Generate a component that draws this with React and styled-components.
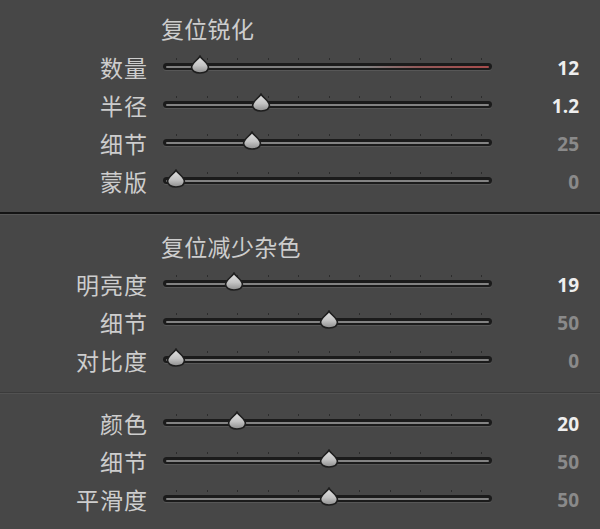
import React from "react";
import styled, { createGlobalStyle } from "styled-components";

const Global = createGlobalStyle`
  html, body { margin: 0; padding: 0; background: #474747; }
  body { font-family: "Noto Sans CJK SC", "Noto Sans", sans-serif; }
`;

const Panel = styled.div`
  width: 600px;
  height: 529px;
  overflow: hidden;
  background: #474747;
  display: flex;
  flex-direction: column;
`;

const Section = styled.section`
  display: flex;
  flex-direction: column;
  padding-top: ${(p) => p.$top}px;
`;

const Heading = styled.div`
  height: 30px;
  line-height: 30px;
  padding-left: 161px;
  margin-bottom: ${(p) => p.$after}px;
  font-size: 23px;
  letter-spacing: 0.3px;
  color: #cdcdcd;
  white-space: nowrap;
`;

const Row = styled.div`
  display: grid;
  grid-template-columns: 148px 344px 87px;
  height: 38px;
  align-items: center;
`;

const Label = styled.div`
  font-size: 23px;
  letter-spacing: 1px;
  color: #cdcdcd;
  text-align: right;
  line-height: 37px;
  padding-bottom: 1px;
  white-space: nowrap;
`;

const SliderWrap = styled.div`
  position: relative;
  height: 38px;
  margin-left: 15px;
  display: flex;
  flex-direction: column;
  padding-top: 9px;
  box-sizing: border-box;
`;

const Ticks = styled.div`
  margin-left: 13px;
  width: 306px;
  height: 2px;
  display: flex;
  justify-content: space-between;
`;

const Tick = styled.span`
  width: 1px;
  height: 2px;
  background: #2c2c2c;
`;

const Track = styled.div`
  margin-top: 3px;
  height: 7px;
  border-radius: 4px;
  background: #1b1b1b;
  box-shadow: 0 1px 0 rgba(255, 255, 255, 0.09);
  display: flex;
  flex-direction: column;
  padding: 3px 3px 2px;
  box-sizing: border-box;
`;

const Inner = styled.div`
  height: 2px;
  border-radius: 1px;
  background: ${(p) =>
    p.$tint
      ? "linear-gradient(to right, #808080 0%, #808080 62%, #925a5a 78%, #a84c4c 100%)"
      : "#838383"};
`;

const Thumb = styled.svg`
  position: absolute;
  top: 6px;
  width: 20px;
  height: 19px;
  margin-left: -10px;
`;

const Value = styled.div`
  font-family: "Open Sans", "Noto Sans", sans-serif;
  font-weight: 700;
  font-size: 19px;
  text-align: right;
  line-height: 38px;
  color: ${(p) => (p.$active ? "#eeeeee" : "#8a8a8a")};
`;

const SepStrong = styled.div`
  margin-top: ${(p) => p.$top}px;
  height: 2px;
  background: #141414;
  border-bottom: 1px solid #575757;
`;

const SepSoft = styled.div`
  margin-top: ${(p) => p.$top}px;
  height: 1px;
  background: #3b3b3b;
  border-bottom: 1px solid #525252;
`;

function Slider({ pos, tint }) {
  const left = 13 + pos * 305;
  return (
    <SliderWrap>
      <Ticks>
        {Array.from({ length: 11 }).map((_, i) => (
          <Tick key={i} />
        ))}
      </Ticks>
      <Track>
        <Inner $tint={tint} />
      </Track>
      <Thumb viewBox="0 0 20 19" style={{ left }}>
        <defs>
          <linearGradient id="tg" x1="0" y1="0" x2="0" y2="1">
            <stop offset="0" stopColor="#e2e2e2" />
            <stop offset="0.55" stopColor="#c4c4c4" />
            <stop offset="1" stopColor="#8e8e8e" />
          </linearGradient>
        </defs>
        <path
          d="M10 1.2 C11.4 4.2 18.4 8 18.4 12.3 C18.4 16 14.8 18 10 18 C5.2 18 1.6 16 1.6 12.3 C1.6 8 8.6 4.2 10 1.2 Z"
          fill="url(#tg)"
          stroke="#1e1e1e"
          strokeWidth="1.6"
        />
      </Thumb>
    </SliderWrap>
  );
}

function SliderRow({ label, value, pos, active, tint }) {
  return (
    <Row>
      <Label>{label}</Label>
      <Slider pos={pos} tint={tint} />
      <Value $active={active}>{value}</Value>
    </Row>
  );
}

export default function App() {
  return (
    <Panel>
      <Global />
      <Section $top={13}>
        <Heading $after={6}>复位锐化</Heading>
        <SliderRow label="数量" value="12" pos={12 / 150} active tint />
        <SliderRow label="半径" value="1.2" pos={0.7 / 2.5} active />
        <SliderRow label="细节" value="25" pos={0.25} />
        <SliderRow label="蒙版" value="0" pos={0} />
      </Section>
      <SepStrong $top={11} />
      <Section $top={16}>
        <Heading $after={5}>复位减少杂色</Heading>
        <SliderRow label="明亮度" value="19" pos={0.19} active />
        <SliderRow label="细节" value="50" pos={0.5} />
        <SliderRow label="对比度" value="0" pos={0} />
      </Section>
      <SepSoft $top={12} />
      <Section $top={11}>
        <SliderRow label="颜色" value="20" pos={0.2} active />
        <SliderRow label="细节" value="50" pos={0.5} />
        <SliderRow label="平滑度" value="50" pos={0.5} />
      </Section>
    </Panel>
  );
}
